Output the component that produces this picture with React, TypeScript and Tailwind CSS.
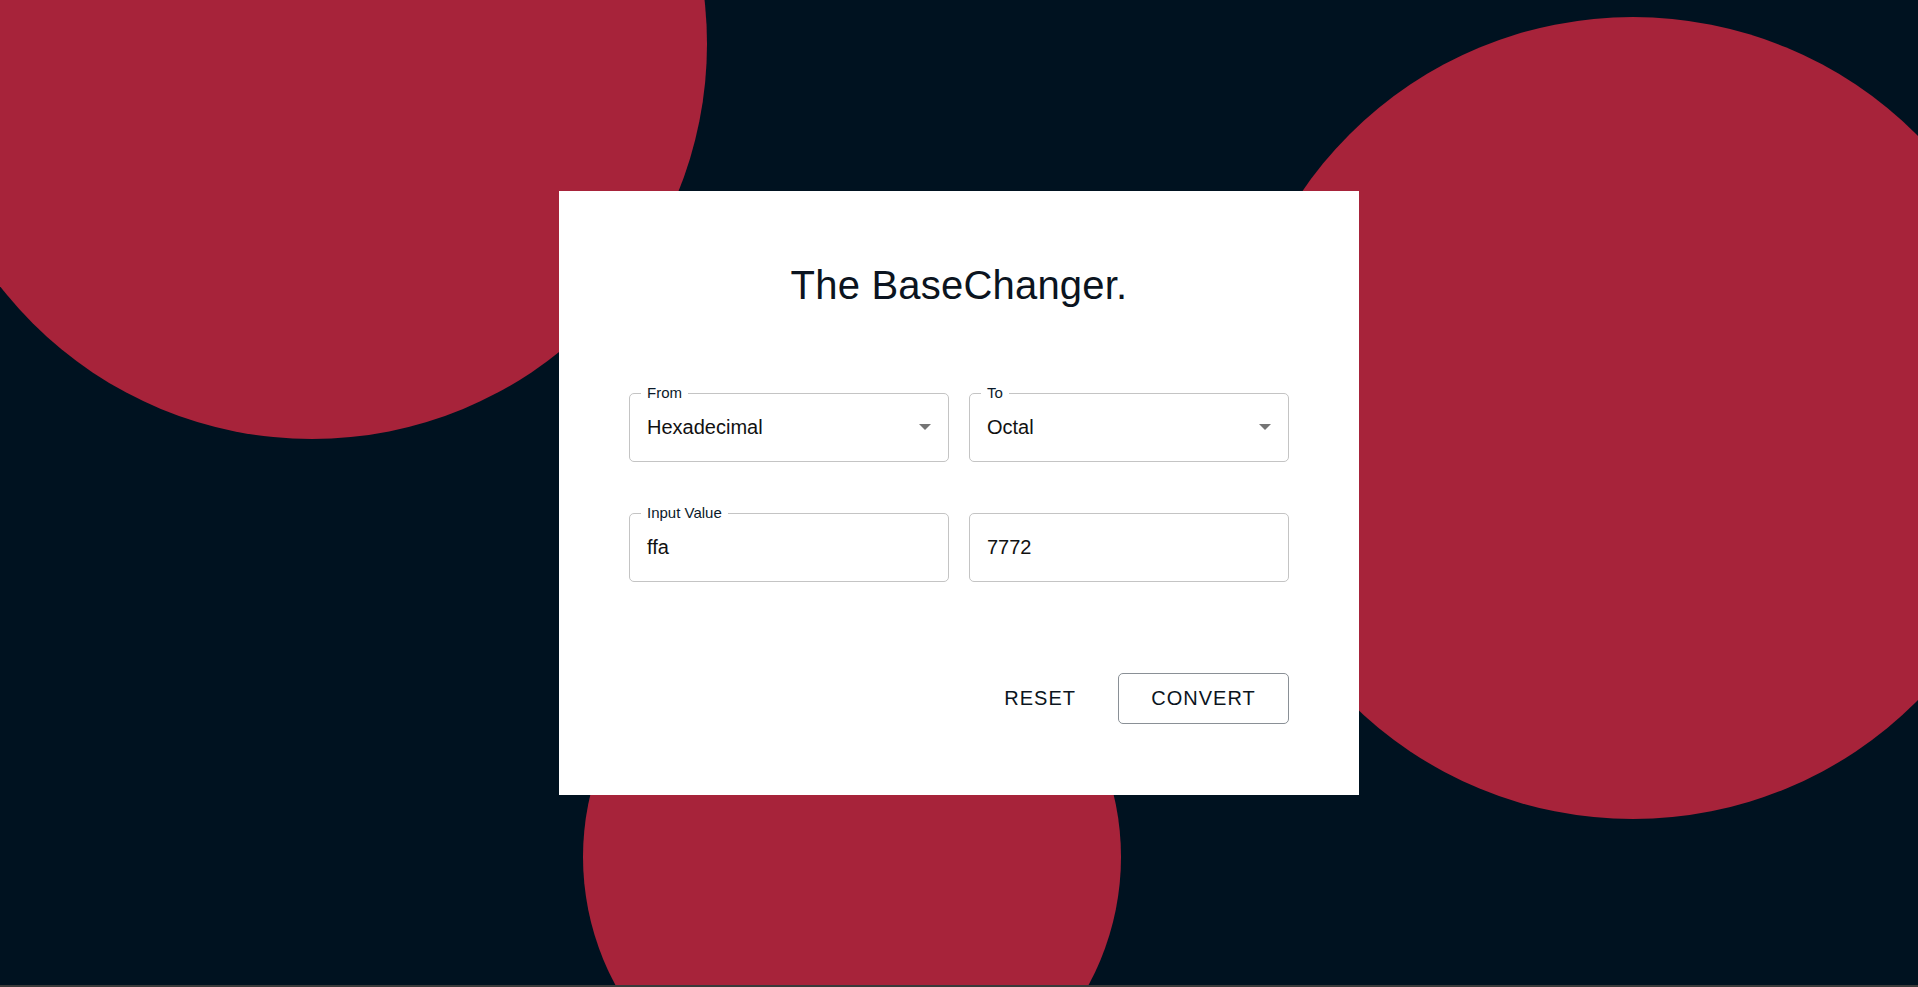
import React from 'react'

const font = { fontFamily: '"Liberation Sans", Arial, sans-serif' }

function Caret() {
  return (
    <svg width="12" height="6" viewBox="0 0 12 6" className="shrink-0">
      <polygon points="0,0 12,0 6,6" fill="#757575" />
    </svg>
  )
}

interface FieldProps {
  label?: string
  value: string
  select?: boolean
}

function Field({ label, value, select }: FieldProps) {
  return (
    <div className="relative h-[69px] flex-1 rounded-[5px] border border-[#c4c4c4] flex items-center justify-between pl-[17px] pr-[17px]">
      {label && (
        <span className="absolute -top-[10px] left-[11px] bg-white px-[6px] text-[15px] leading-[18px] text-[#0b1a2a]">
          {label}
        </span>
      )}
      <span className="text-[20px] text-[#111]">{value}</span>
      {select && <Caret />}
    </div>
  )
}

export default function App() {
  return (
    <div className="h-screen w-full flex flex-col bg-[#001220]" style={font}>
      <div className="relative flex-1 overflow-hidden flex items-center justify-center">
        {/* background circles */}
        <div className="absolute left-[-83px] top-[-351px] h-[790px] w-[790px] rounded-full bg-[#a7233a]" />
        <div className="absolute left-[1232px] top-[17px] h-[802px] w-[802px] rounded-full bg-[#a7233a]" />
        <div className="absolute left-[583px] top-[588px] h-[538px] w-[538px] rounded-full bg-[#a7233a]" />

        <div className="relative z-10 w-[800px] h-[604px] bg-white p-[70px] flex flex-col">
          <h1 className="text-center text-[40px] leading-[48px] text-[#0b1420] tracking-[0.2px]">
            The BaseChanger.
          </h1>

          <div className="mt-[84px] flex gap-[20px]">
            <Field label="From" value="Hexadecimal" select />
            <Field label="To" value="Octal" select />
          </div>

          <div className="mt-[51px] flex gap-[20px]">
            <Field label="Input Value" value="ffa" />
            <Field value="7772" />
          </div>

          <div className="mt-[91px] flex justify-end items-center gap-[15px]">
            <button className="h-[51px] px-[27px] text-[20px] tracking-[1px] text-[#0b1420]">
              RESET
            </button>
            <button className="h-[51px] w-[171px] rounded-[5px] border border-[#8a9096] text-[20px] tracking-[1px] text-[#0b1420]">
              CONVERT
            </button>
          </div>
        </div>
      </div>
      <div className="h-[2px] bg-[#3a3a3a]" />
    </div>
  )
}
